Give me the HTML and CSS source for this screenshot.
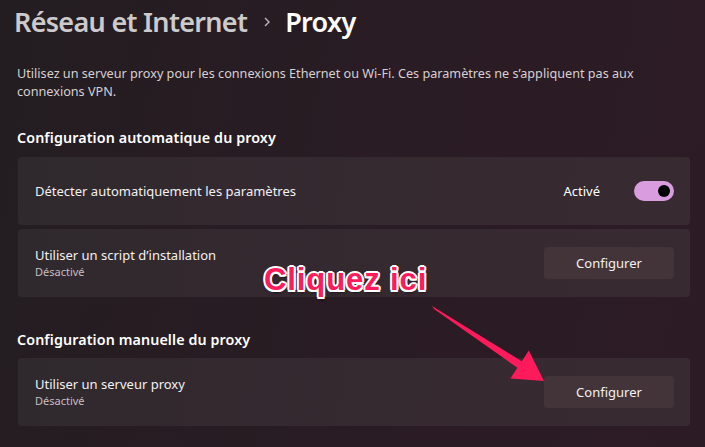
FILE: index.html
```html
<!DOCTYPE html>
<html lang="fr">
<head>
	<meta charset="UTF-8">
	<title>Proxy</title>
	<link rel="stylesheet" href="styles.css">
</head>
<body>
	<div class="page">
		<h1 class="crumb">
			<span class="parent">Réseau et Internet</span>
			<svg class="chev" width="8" height="10" viewBox="0 0 8 10"><path d="M2 1 L6 5 L2 9" fill="none" stroke="#bdb6ba" stroke-width="1.4"/></svg>
			<span class="current">Proxy</span>
		</h1>
		<p class="intro">Utilisez un serveur proxy pour les connexions Ethernet ou Wi-Fi. Ces paramètres ne s’appliquent pas aux connexions VPN.</p>

		<h2 class="section">Configuration automatique du proxy</h2>
		<div class="card first">
			<div class="label">
				<div class="name">Détecter automatiquement les paramètres</div>
			</div>
			<div class="ctrl">
				<span class="state-on">Activé</span>
				<span class="toggle"><span class="knob"></span></span>
			</div>
		</div>
		<div class="card">
			<div class="label">
				<div class="name">Utiliser un script d’installation</div>
				<div class="sub">Désactivé</div>
			</div>
			<button class="btn">Configurer</button>
		</div>

		<h2 class="section second">Configuration manuelle du proxy</h2>
		<div class="card first">
			<div class="label">
				<div class="name">Utiliser un serveur proxy</div>
				<div class="sub">Désactivé</div>
			</div>
			<button class="btn">Configurer</button>
		</div>
	</div>

	<!-- annotation -->
	<div class="callout">Cliquez ici</div>
	<svg class="arrow" width="705" height="447" viewBox="0 0 705 447">
		<polygon points="432,306 521.8,361.2 528.8,350.6 544,381 510.4,378.4 517.4,367.8 434,309" fill="#ff1a5c"/>
	</svg>
</body>
</html>
```

FILE: styles.css
```css
html, body {
	margin: 0;
	padding: 0;
}

body {
	width: 705px;
	height: 447px;
	overflow: hidden;
	position: relative;
	background: linear-gradient(100deg, #231d21 0%, #2a1c24 55%, #2c1b24 100%);
	font-family: "Noto Sans", "Open Sans", sans-serif;
	color: #ffffff;
}

.page {
	padding: 4px 15px 0 17px;
}

.crumb {
	margin: 0;
	height: 36px;
	display: flex;
	align-items: center;
	font-size: 27px;
	font-weight: 600;
	letter-spacing: -0.7px;
	line-height: 36px;
}

.crumb .parent {
	color: #cdcacc;
	margin-left: -3px;
}

.crumb .chev {
	margin: 0 14px 0 16px;
}

.crumb .current {
	color: #ffffff;
}

.intro {
	margin: 24px 0 0 0;
	font-size: 12.65px;
	line-height: 18px;
	color: #d6d0d3;
}

.section {
	margin: 29px 0 10px 0;
	font-size: 14.3px;
	font-weight: 600;
	letter-spacing: 0.1px;
	line-height: 18px;
}

.section.second {
	margin-top: 34px;
	margin-bottom: 9px;
}

.card {
	margin: 4px 0 0 1px;
	height: 68px;
	box-sizing: border-box;
	padding: 0 16px 0 17px;
	display: flex;
	align-items: center;
	justify-content: space-between;
	border-radius: 4px;
	background: linear-gradient(100deg, #2f292d 0%, #352930 45%, #382a31 100%);
}

.card.first {
	margin-top: 0;
}

.name {
	font-size: 13px;
	line-height: 18px;
	color: #f4f0f2;
}

.sub {
	font-size: 11px;
	line-height: 16px;
	color: #c6bdc1;
}

.ctrl {
	display: flex;
	align-items: center;
	gap: 34px;
	font-size: 13px;
}

.toggle {
	width: 40px;
	height: 20px;
	border-radius: 10px;
	background: #d99ddf;
	display: flex;
	align-items: center;
	justify-content: flex-end;
}

.knob {
	width: 12px;
	height: 12px;
	border-radius: 50%;
	background: #000000;
	margin-right: 4px;
}

.btn {
	width: 130px;
	height: 32px;
	border: none;
	border-radius: 4px;
	background: #433439;
	color: #f4f0f2;
	font-family: "Noto Sans", "Open Sans", sans-serif;
	font-size: 13px;
	padding: 0 0 1px 0;
}

.callout {
	position: absolute;
	left: 264px;
	top: 264px;
	font-family: "Liberation Sans", Arial, sans-serif;
	font-size: 31px;
	font-weight: bold;
	line-height: 31px;
	letter-spacing: 0.9px;
	color: #ff1a5c;
	text-shadow:
		2px 0 0 #fff, -2px 0 0 #fff, 0 2px 0 #fff, 0 -2px 0 #fff,
		1.5px 1.5px 0 #fff, -1.5px 1.5px 0 #fff, 1.5px -1.5px 0 #fff, -1.5px -1.5px 0 #fff,
		1px 3px 3px rgba(0, 0, 0, 0.5);
}

.arrow {
	position: absolute;
	left: 0;
	top: 0;
	pointer-events: none;
}
```
